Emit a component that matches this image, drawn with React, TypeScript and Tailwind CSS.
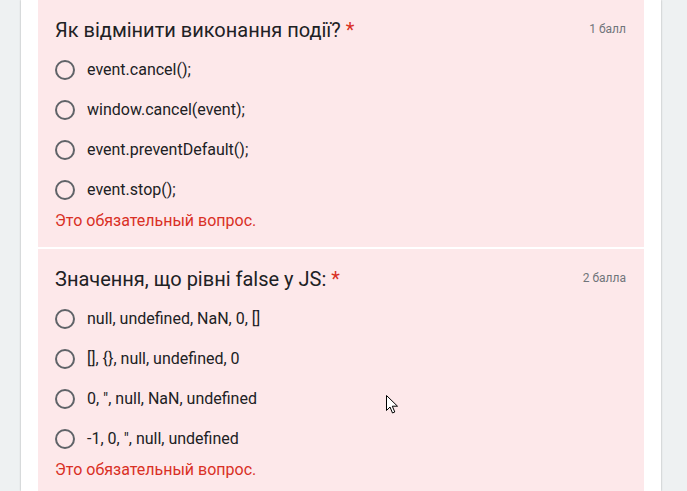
import React from "react";

type Question = {
  title: string;
  points: string;
  options: string[];
};

const questions: Question[] = [
  {
    title: "Як відмінити виконання події?",
    points: "1 балл",
    options: ["event.cancel();", "window.cancel(event);", "event.preventDefault();", "event.stop();"],
  },
  {
    title: "Значення, що рівні false у JS:",
    points: "2 балла",
    options: [
      "null, undefined, NaN, 0, []",
      "[], {}, null, undefined, 0",
      "0, '', null, NaN, undefined".replace(/''/g, "\""),
      "-1, 0, '', null, undefined".replace(/''/g, "\""),
    ],
  },
];

function QuestionBlock({ q }: { q: Question }) {
  return (
    <div className="bg-[#fde8ea] pl-[17px] pr-[18px] pt-[18px] pb-[16px]">
      <div className="flex items-start justify-between">
        <div className="text-[20px] leading-6 text-[#202124]">
          {q.title} <span className="text-[#d93025]">*</span>
        </div>
        <div className="pt-[3px] text-xs leading-4 text-[#70757a]">{q.points}</div>
      </div>
      <div className="mt-2 flex flex-col">
        {q.options.map((o) => (
          <label key={o} className="flex h-10 items-center">
            <span className="h-5 w-5 shrink-0 rounded-full border-2 border-[#5f6368]" />
            <span className="ml-3 text-base text-[#202124]">{o}</span>
          </label>
        ))}
      </div>
      <div className="mt-px text-base leading-5 text-[#d93025]">Это обязательный вопрос.</div>
    </div>
  );
}

export default function App() {
  return (
    <div
      className="relative h-[491px] w-[687px] overflow-hidden bg-[#eef1f2]"
      style={{ fontFamily: "Roboto, 'Noto Sans', sans-serif" }}
    >
      <div className="ml-[21px] h-full w-[640px] bg-white px-[17px] shadow-[0_0_2px_rgba(0,0,0,0.3)]">
        <div className="flex flex-col gap-[2px]">
          {questions.map((q) => (
            <QuestionBlock key={q.title} q={q} />
          ))}
        </div>
      </div>
      {/* mouse cursor */}
      <svg className="absolute left-[386px] top-[395px]" width="13" height="20" viewBox="0 0 13 20">
        <path d="M0.5 0.5 L0.5 15.5 L4 12 L6.5 18 L8.8 17 L6.3 11.2 L11.5 11.2 Z" fill="white" stroke="black" strokeWidth="1" strokeLinejoin="round" />
      </svg>
    </div>
  );
}
